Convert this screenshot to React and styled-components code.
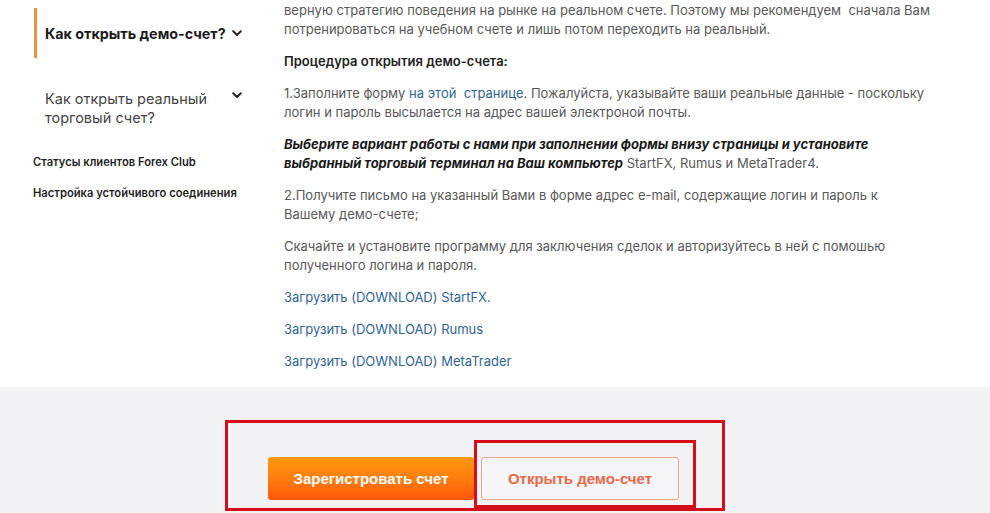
import React from 'react';
import styled, { createGlobalStyle } from 'styled-components';

const GlobalStyle = createGlobalStyle`
    html, body {
        margin: 0;
        padding: 0;
        background: #f3f3f5;
    }
    body {
        font-family: Inter, "Noto Sans", "DejaVu Sans", sans-serif;
        -webkit-font-smoothing: antialiased;
    }
`

const Page = styled.div`
    width: 990px;
    height: 513px;
    overflow: hidden;
    background: #f3f3f5;
`

const Content = styled.section`
    background: #fff;
    display: grid;
    grid-template-columns: 284px 1fr;
    height: 387px;
`

const Sidebar = styled.nav`
    display: flex;
    flex-direction: column;
    padding-top: 8px;
`

const Question = styled.div`
    display: flex;
    align-items: ${p => (p.$active ? 'center' : 'flex-start')};
    margin-left: 34px;
    width: 211px;
    box-sizing: border-box;
    min-height: 50px;
    padding-left: 8px;
    border-left: 3px solid ${p => (p.$active ? '#e8913e' : 'transparent')};
    margin-bottom: ${p => p.$gap || 0}px;
    font-size: ${p => (p.$active ? '14.3px' : '14.5px')};
    line-height: 19px;
    font-weight: ${p => (p.$active ? 700 : 400)};
    color: ${p => (p.$active ? '#1b1b1b' : '#444')};

    span {
        flex: ${p => (p.$active ? '0 0 auto' : '0 0 170px')};
    }
    svg {
        margin-left: ${p => (p.$active ? '6px' : 'auto')};
        margin-top: ${p => (p.$active ? '1px' : '3px')};
        margin-right: 3px;
        flex: 0 0 auto;
    }
`

const SideLink = styled.a`
    margin-left: 33px;
    font-size: 11.2px;
    line-height: 16px;
    font-weight: 600;
    color: #1f1f1f;
    text-decoration: none;
    margin-bottom: ${p => p.$gap || 0}px;
`

const Article = styled.article`
    padding-top: 1px;
    font-size: 13px;
    line-height: 19px;
    color: #585858;
    white-space: nowrap;

    p {
        margin: 0 0 13px;
    }
`

const Heading = styled.p`
    font-weight: 600;
    color: #222;
`

const Emph = styled.b`
    font-style: italic;
    font-weight: 700;
    color: #1a1a1a;
`

const Link = styled.a`
    color: #2f6594;
    text-decoration: none;
`

const Footer = styled.div`
    padding-top: 33px;
    padding-left: 225px;
`

const Annotation = styled.div`
    display: flex;
    align-items: flex-end;
    box-sizing: border-box;
    border: 3px solid #d40f1c;
    width: ${p => p.$w}px;
    height: ${p => p.$h}px;
    padding: ${p => p.$pad};
`

const Button = styled.button`
    box-sizing: border-box;
    flex: 0 0 auto;
    height: 43px;
    width: ${p => p.$w}px;
    border-radius: 3px;
    font-family: "Liberation Sans", Arial, sans-serif;
    font-weight: 700;
    font-size: 15px;
    cursor: pointer;
    ${p => p.$primary ? `
        margin-bottom: 8px;
        border: 0;
        color: #fff;
        background: linear-gradient(180deg, #ff9a10 0%, #ff7a0c 55%, #ff560a 100%);
    ` : `
        border: 1px solid #eba78f;
        color: #e5694b;
        background: #f6f5f7;
    `}
`

const Chevron = () => (
    <svg width="10" height="7" viewBox="0 0 10 7">
        <polyline points="1.2,1.3 5,5 8.8,1.3" fill="none" stroke="#222" strokeWidth="2" strokeLinecap="round" strokeLinejoin="round" />
    </svg>
)

export default () => (
    <Page>
        <GlobalStyle />
        <Content>
            <Sidebar>
                <Question $active $gap={31}>
                    <span>Как открыть демо-счет?</span>
                    <Chevron />
                </Question>
                <Question $gap={15}>
                    <span>Как открыть реальный торговый счет?</span>
                    <Chevron />
                </Question>
                <SideLink href="#" $gap={15}>Статусы клиентов Forex Club</SideLink>
                <SideLink href="#">Настройка устойчивого соединения</SideLink>
            </Sidebar>
            <Article>
                <p>верную стратегию поведения на рынке на реальном счете. Поэтому мы рекомендуем&nbsp; сначала Вам<br />потренироваться на учебном счете и лишь потом переходить на реальный.</p>
                <Heading>Процедура открытия демо-счета:</Heading>
                <p>1.Заполните форму <Link href="#">на этой&nbsp; странице</Link>. Пожалуйста, указывайте ваши реальные данные - поскольку<br />логин и пароль высылается на адрес вашей электроной почты.</p>
                <p><Emph>Выберите вариант работы с нами при заполнении формы внизу страницы и установите<br />выбранный торговый терминал на Ваш компьютер</Emph> StartFX, Rumus и MetaTrader4.</p>
                <p>2.Получите письмо на указанный Вами в форме адрес e-mail, содержащие логин и пароль к<br />Вашему демо-счете;</p>
                <p>Скачайте и установите программу для заключения сделок и авторизуйтесь в ней с помошью<br />полученного логина и пароля.</p>
                <p><Link href="#">Загрузить (DOWNLOAD) StartFX.</Link></p>
                <p><Link href="#">Загрузить (DOWNLOAD) Rumus</Link></p>
                <p><Link href="#">Загрузить (DOWNLOAD) MetaTrader</Link></p>
            </Article>
        </Content>
        <Footer>
            <Annotation $w={500} $h={91} $pad="0 0 0 40px">
                <Button $primary $w={206}>Зарегистровать счет</Button>
                <Annotation $w={222} $h={68} $pad="0 0 5px 4px">
                    <Button $w={198}>Открыть демо-счет</Button>
                </Annotation>
            </Annotation>
        </Footer>
    </Page>
)
